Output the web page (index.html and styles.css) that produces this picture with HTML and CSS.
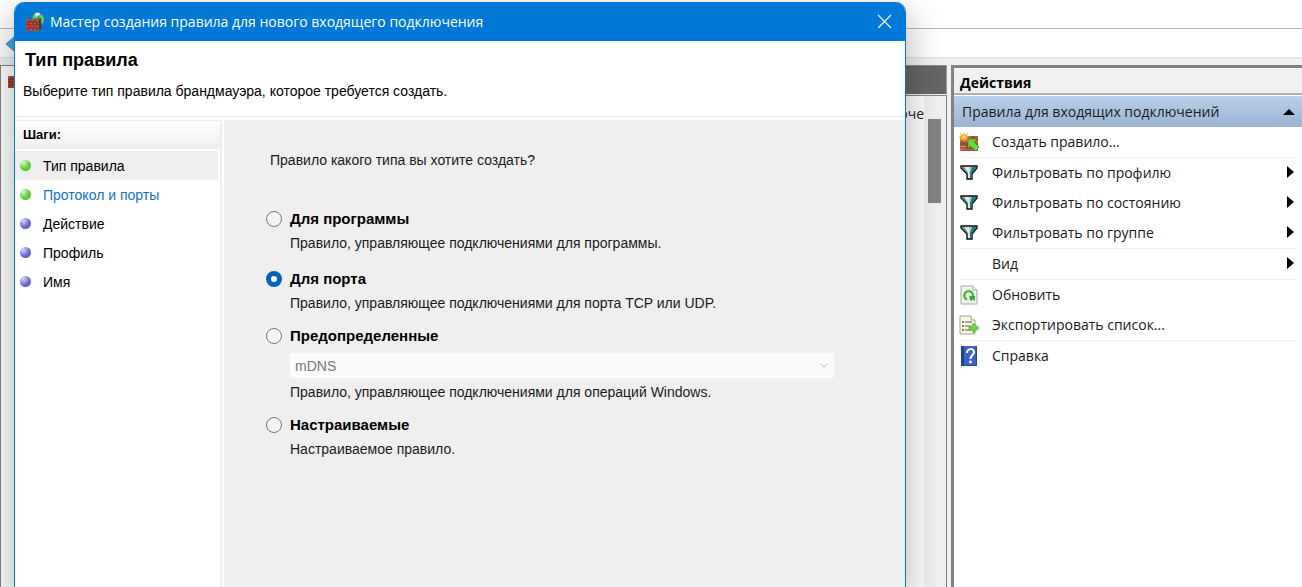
FILE: index.html
```html
<!DOCTYPE html>
<html lang="ru">
<head>
<meta charset="utf-8">
<title>Мастер создания правила для нового входящего подключения</title>
<link rel="stylesheet" href="styles.css">
</head>
<body>
<svg class="defs" aria-hidden="true">
  <defs>
    <symbol id="firewall" viewBox="0 0 20 20">
      <circle cx="13" cy="6.500" r="6" fill="#2f86dc"/>
      <path d="M8 3l4-2 2 2-2 3-4 1zM14 3l3 0 2 4-1 5-3-3z" fill="#5fce45"/>
      <path d="M10 1l4-.5 1 2-4 2.500z" fill="#e8f6ff"/>
      <path d="M1 7h14v12H1z" fill="#b5523d"/>
      <path d="M1 10h14M1 13h14M1 16h14M5 7v3M10 7v3M3 10v3M8 10v3M12 10v3M5 13v3M10 13v3M3 16v3M8 16v3M12 16v3" stroke="#6c2a20" stroke-width=".8" fill="none"/>
      <path d="M14 7l2-1v11l-2 2z" fill="#6d2a20"/>
    </symbol>
    <symbol id="newrule" viewBox="0 0 20 20">
      <path d="M1 4h18v15H1z" fill="#b65640"/>
      <path d="M1 4h7v4H1zM13 8h6v4h-6zM1 14h6v4H1z" fill="#cf8468"/>
      <path d="M1 8h18M1 12h18M1 16h18M8 4v4M14 4v4M5 8v4M11 8v4M17 8v4M8 12v4M5 16v3" stroke="#7d3425" stroke-width=".8" fill="none"/>
      <path d="M9 7h9l-3 3 5 5-3 4-6-5-2 3z" fill="#66d943" stroke="#2f9424" stroke-width=".7"/>
      <path d="M5 0l1 3 3-2-1 3 3 1-3 1 1 3-3-1-1 3-1-3-3 1 1-3-3-1 3-1-1-3 3 2z" fill="#f7ae2a"/>
      <circle cx="5" cy="5" r="1.600" fill="#ffe27a"/>
    </symbol>
    <symbol id="funnel" viewBox="0 0 18 15">
      <path d="M1 1h16v2l-5 6v5H7V9L1 3z" fill="#b9c4c4" stroke="#111" stroke-width="1.400"/>
      <path d="M3 2h6l1 11H8V8z" fill="#e4e8e8"/>
      <path d="M12 2h4v1l-4.500 5.500v4.500H10V8z" fill="#14807f"/>
      <path d="M2 2h2l4 6v1z" fill="#2b9290"/>
    </symbol>
    <symbol id="refresh" viewBox="0 0 18 20">
      <path d="M1 1h12l4 4v14H1z" fill="#f3f3ef" stroke="#a5a5a0"/>
      <path d="M13 1v4h4" fill="#fff" stroke="#a5a5a0"/>
      <path d="M7 14.500a4.300 4.300 0 1 1 5.800-3" fill="none" stroke="#3ebc35" stroke-width="2.400"/>
      <path d="M9.500 11h5.500v5l-2-1.500-2 1.500-1.500-2z" fill="#35ad2d"/>
    </symbol>
    <symbol id="export" viewBox="0 0 20 20">
      <path d="M1 1h11l4 4v14H1z" fill="#fbf8df" stroke="#a3a293"/>
      <path d="M12 1v4h4" fill="#fff" stroke="#a3a293"/>
      <path d="M3 7h2M3 11h2M3 15h2" stroke="#555" stroke-width="1.500"/>
      <path d="M6 7h7M6 11h4M6 15h7" stroke="#8c8c9c" stroke-width="1.300"/>
      <path d="M10 11h4V8l6 5-6 5v-3h-4z" fill="#69d645" stroke="#47a82f" stroke-width=".7"/>
    </symbol>
    <symbol id="help" viewBox="0 0 18 20">
      <path d="M1 0h16v20H1z" fill="#3b62c8"/>
      <path d="M1 0h3v20H1z" fill="#203f98"/>
      <path d="M16 0h1v20H1v-1h15z" fill="#27468f"/>
      <path d="M7 7c0-5 7-5 7-1 0 3-3.500 3-3.500 7" fill="none" stroke="#fff" stroke-width="2"/>
      <circle cx="10.500" cy="16" r="1.400" fill="#fff"/>
    </symbol>
    <symbol id="arrow" viewBox="0 0 7 12"><path d="M0 0l7 6-7 6z" fill="#000"/></symbol>
  </defs>
</svg>

<div class="console">
  <div class="menubar"></div>
  <div class="toolbar">
    <svg class="back" viewBox="0 0 16 16" aria-hidden="true"><path d="M0 8l8-7v4h8v6H8v4z" fill="#39a7dc" stroke="#5b86a8"/></svg>
  </div>
  <div class="panes">
    <div class="list">
      <div class="tree-head"><svg class="i20"><use href="#firewall"/></svg></div>
      <div class="list-side">
        <div class="list-title"></div>
        <div class="list-body">
          <div class="column">оче</div>
          <div class="scroll"><div class="thumb"></div></div>
        </div>
      </div>
    </div>
    <aside class="actions">
      <h2 class="actions-title">Действия</h2>
      <button class="section" type="button"><span>Правила для входящих подключений</span><svg class="up" viewBox="0 0 12 6" aria-hidden="true"><path d="M0 6l6-6 6 6z"/></svg></button>
      <ul class="group">
        <li><button type="button" class="action"><svg class="icon"><use href="#newrule"/></svg><span>Создать правило...</span></button></li>
      </ul>
      <ul class="group">
        <li><button type="button" class="action"><svg class="icon funnel"><use href="#funnel"/></svg><span>Фильтровать по профилю</span><svg class="more"><use href="#arrow"/></svg></button></li>
        <li><button type="button" class="action"><svg class="icon funnel"><use href="#funnel"/></svg><span>Фильтровать по состоянию</span><svg class="more"><use href="#arrow"/></svg></button></li>
        <li><button type="button" class="action"><svg class="icon funnel"><use href="#funnel"/></svg><span>Фильтровать по группе</span><svg class="more"><use href="#arrow"/></svg></button></li>
      </ul>
      <ul class="group">
        <li><button type="button" class="action"><i class="icon"></i><span>Вид</span><svg class="more"><use href="#arrow"/></svg></button></li>
      </ul>
      <ul class="group">
        <li><button type="button" class="action"><svg class="icon"><use href="#refresh"/></svg><span>Обновить</span></button></li>
        <li><button type="button" class="action"><svg class="icon"><use href="#export"/></svg><span>Экспортировать список...</span></button></li>
      </ul>
      <ul class="group">
        <li><button type="button" class="action"><svg class="icon"><use href="#help"/></svg><span>Справка</span></button></li>
      </ul>
    </aside>
  </div>
</div>

<div class="dialog" role="dialog" aria-labelledby="caption">
  <div class="titlebar">
    <svg class="i20"><use href="#firewall"/></svg>
    <span id="caption" class="caption">Мастер создания правила для нового входящего подключения</span>
    <button class="close" type="button" aria-label="Закрыть"><svg viewBox="0 0 12 12"><path d="M0 0l12 12M12 0L0 12"/></svg></button>
  </div>
  <header class="intro">
    <h1>Тип правила</h1>
    <p>Выберите тип правила брандмауэра, которое требуется создать.</p>
  </header>
  <div class="wizard">
    <nav class="steps">
      <h2>Шаги:</h2>
      <ol>
        <li class="step done current">Тип правила</li>
        <li class="step done"><a href="#">Протокол и порты</a></li>
        <li class="step">Действие</li>
        <li class="step">Профиль</li>
        <li class="step">Имя</li>
      </ol>
    </nav>
    <form class="page">
      <p class="question">Правило какого типа вы хотите создать?</p>
      <div class="option">
        <input type="radio" name="type" id="program"><label for="program">Для программы</label>
        <p>Правило, управляющее подключениями для программы.</p>
      </div>
      <div class="option">
        <input type="radio" name="type" id="port" checked><label for="port">Для порта</label>
        <p>Правило, управляющее подключениями для порта TCP или UDP.</p>
      </div>
      <div class="option">
        <input type="radio" name="type" id="predefined"><label for="predefined">Предопределенные</label>
        <div class="combo">
          <select disabled aria-label="Предопределенные"><option>mDNS</option></select>
          <svg viewBox="0 0 6 4" aria-hidden="true"><path d="M0 0l3 3 3-3"/></svg>
        </div>
        <p>Правило, управляющее подключениями для операций Windows.</p>
      </div>
      <div class="option">
        <input type="radio" name="type" id="custom"><label for="custom">Настраиваемые</label>
        <p>Настраиваемое правило.</p>
      </div>
    </form>
  </div>
</div>
</body>
</html>
```
FILE: styles.css
```css
* { box-sizing: border-box; }
html, body { height: 100%; }
body {
  margin: 0;
  overflow: hidden;
  background: #f0f0f0;
  color: #1a1a1a;
  font: 14px/20px "Open Sans", "Noto Sans", sans-serif;
}
h1, h2, p, ul, ol { margin: 0; padding: 0; }
ul, ol { list-style: none; }
button { margin: 0; padding: 0; border: 0; background: none; color: inherit; font: inherit; text-align: left; }
.defs { position: absolute; width: 0; height: 0; }
.i20 { width: 20px; height: 20px; flex: none; }

/* Console window behind the wizard */
.console { display: flex; flex-direction: column; height: 100%; }
.menubar { flex: none; height: 29px; background: #fff; border-bottom: 1px solid #b4b4b4; }
.toolbar { flex: none; height: 29px; padding: 7px 6px; background: #fff; border-bottom: 1px solid #e2e2e2; }
.back { display: block; width: 16px; height: 16px; }
.panes { flex: 1; min-height: 0; display: flex; gap: 4px; padding-top: 7px; }
.list { flex: 1; display: flex; border-left: 1px solid #82838c; }
.tree-head { flex: 1; padding: 3px 6px; border-top: 1px solid #82838c; background: #fff; }
.list-side { flex: 1; display: flex; flex-direction: column; }
.list-title { flex: none; height: 29px; background: #666; border-top: 1px solid #8a8a8a; border-right: 1px solid #999; }
.list-body { flex: 1; display: flex; margin-top: 1px; border-top: 1px solid #82838c; border-right: 1px solid #82838c; background: #fff; }
.column { flex: 1; padding-top: 8px; text-align: right; }
.scroll { width: 22px; padding: 23px 5px 0 4px; background: #f0f0f0; }
.thumb { height: 84px; background: #838383; }

/* Actions pane */
.actions { width: 351px; flex: none; background: #fff; border-top: 3px solid #828282; border-left: 3px solid #828282; }
.actions-title { height: 27px; padding: 0 6px; border-top: 1px solid #fff; border-bottom: 2px solid #b0b0b0; background: #f0f0f0; color: #000; font-size: 14px; line-height: 27px; }
.section { display: flex; align-items: center; width: 100%; height: 31px; margin-top: 1px; padding: 0 7px 0 8px; background: linear-gradient(#b9d1ea, #9ab3d2); }
.section span { flex: 1; }
.up { width: 12px; height: 6px; }
.group { margin: 0 5px; border-bottom: 1px solid #efefef; }
.group:last-child { border-bottom: 0; }
.action { display: flex; align-items: center; width: 100%; height: 30px; }
.icon { width: 20px; height: 20px; margin-right: 13px; flex: none; }
.funnel { height: 15px; margin-bottom: 2px; }
.action span { flex: 1; }
.more { width: 7px; height: 12px; margin: 0 3px 2px 0; }

/* Wizard window */
.dialog {
  position: absolute;
  top: 2px;
  left: 14px;
  right: 396px;
  bottom: 0;
  display: flex;
  flex-direction: column;
  border: 1px solid #0078d7;
  border-width: 0 1px;
  border-radius: 10px 10px 0 0;
  overflow: hidden;
  background: #fff;
  font-family: "Liberation Sans", Arial, sans-serif;
  box-shadow: 0 14px 34px 4px rgba(0, 0, 0, 0.26);
}
.titlebar { display: flex; align-items: center; gap: 5px; flex: none; height: 39px; padding: 0 14px 0 10px; background: #0078d7; color: #fff; font-family: "Open Sans", "Noto Sans", sans-serif; }
.caption { flex: 1; }
.close svg { display: block; width: 13px; height: 13px; fill: none; stroke: #fff; overflow: visible; }
.intro { flex: none; height: 76px; padding: 9px 8px 0; border-bottom: 1px solid #eee; color: #000; }
.intro h1 { padding-left: 2px; font-size: 18px; line-height: 20px; }
.intro p { margin-top: 11px; }
.wizard { flex: 1; display: flex; margin-top: 3px; }
.steps { width: 207px; flex: none; border: 1px solid #efefef; border-width: 1px 2px 0 0; color: #000; }
.steps h2 { height: 28px; padding-left: 8px; background: linear-gradient(#fff, #efefef); font-size: 13px; line-height: 28px; }
.steps ol { padding: 2px 2px 0 0; }
.step { display: flex; align-items: center; gap: 12px; height: 29px; padding-left: 5px; }
.step::before { content: ""; width: 11px; height: 11px; border-radius: 50%; background: radial-gradient(circle at 30% 25%, #d8d8fa, #6a66d0 55%, #5c58c4); }
.step.done::before { background: radial-gradient(circle at 30% 25%, #d8f8c8, #5ccc3c 55%, #50bc34); }
.current { background: #efefef; }
.step a { color: #0f72d2; text-decoration: none; }
.page { flex: 1; margin-left: 2px; padding: 30px 71px 0 42px; background: #efefef; }
.question { margin-bottom: 39px; padding-left: 4px; }
.option { display: grid; grid-template-columns: 24px 1fr; align-items: center; margin-bottom: 16px; }
.option:nth-of-type(2), .option:nth-of-type(3) { margin-bottom: 13px; }
.option label { color: #000; font-size: 15px; font-weight: bold; line-height: 20px; }
.option p { grid-column: 2; margin-top: 4px; line-height: 20px; }
.option input { appearance: none; width: 16px; height: 16px; margin: 0; border: 1px solid #777; border-radius: 50%; background: #f4f4f4; }
.option input:checked { border: 5px solid #0063bd; background: #fff; }
.combo { grid-column: 2; display: grid; grid-template-columns: 1fr 13px; align-items: center; height: 25px; margin-top: 7px; background: #fafafa; }
.combo select { appearance: none; height: 25px; padding: 0 5px; border: 0; background: transparent; color: #777; opacity: 1; font: inherit; }
.combo svg { width: 6px; height: 4px; fill: none; stroke: #bbb; overflow: visible; }
```
